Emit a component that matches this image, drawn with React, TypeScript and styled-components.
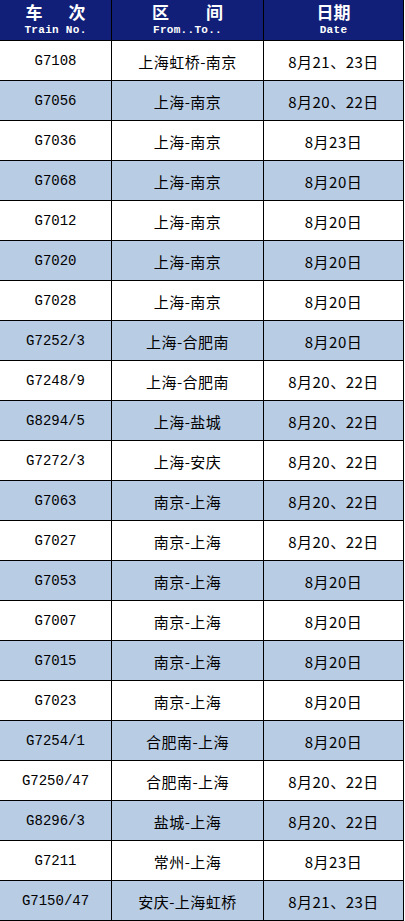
import React from "react";
import styled, { createGlobalStyle } from "styled-components";

const GlobalStyle = createGlobalStyle`
  html, body {
    margin: 0;
    padding: 0;
    background: #ffffff;
  }
  body {
    font-family: "Liberation Mono", "Noto Sans CJK SC", monospace;
  }
`;

interface Train {
  no: string;
  route: string;
  date: string;
}

const trains: Train[] = [
  { no: "G7108", route: "上海虹桥-南京", date: "8月21、23日" },
  { no: "G7056", route: "上海-南京", date: "8月20、22日" },
  { no: "G7036", route: "上海-南京", date: "8月23日" },
  { no: "G7068", route: "上海-南京", date: "8月20日" },
  { no: "G7012", route: "上海-南京", date: "8月20日" },
  { no: "G7020", route: "上海-南京", date: "8月20日" },
  { no: "G7028", route: "上海-南京", date: "8月20日" },
  { no: "G7252/3", route: "上海-合肥南", date: "8月20日" },
  { no: "G7248/9", route: "上海-合肥南", date: "8月20、22日" },
  { no: "G8294/5", route: "上海-盐城", date: "8月20、22日" },
  { no: "G7272/3", route: "上海-安庆", date: "8月20、22日" },
  { no: "G7063", route: "南京-上海", date: "8月20、22日" },
  { no: "G7027", route: "南京-上海", date: "8月20、22日" },
  { no: "G7053", route: "南京-上海", date: "8月20日" },
  { no: "G7007", route: "南京-上海", date: "8月20日" },
  { no: "G7015", route: "南京-上海", date: "8月20日" },
  { no: "G7023", route: "南京-上海", date: "8月20日" },
  { no: "G7254/1", route: "合肥南-上海", date: "8月20日" },
  { no: "G7250/47", route: "合肥南-上海", date: "8月20、22日" },
  { no: "G8296/3", route: "盐城-上海", date: "8月20、22日" },
  { no: "G7211", route: "常州-上海", date: "8月23日" },
  { no: "G7150/47", route: "安庆-上海虹桥", date: "8月21、23日" },
];

const Sheet = styled.div`
  width: 404px;
  display: flex;
  flex-direction: column;
`;

const Row = styled.div<{ $shaded?: boolean; $head?: boolean }>`
  display: grid;
  grid-template-columns: 112px 152px 140px;
  height: ${(p) => (p.$head ? "41px" : "40px")};
  box-sizing: border-box;
  border-bottom: 1px solid #000;
  background: ${(p) => (p.$head ? "#111f78" : p.$shaded ? "#b8cce4" : "#ffffff")};
`;

const Cell = styled.div`
  box-sizing: border-box;
  border-right: 1px solid #000;
  display: flex;
  align-items: center;
  justify-content: center;
  color: #000;
  white-space: nowrap;
  padding-top: 1px;
`;

const HeadCell = styled(Cell)`
  flex-direction: column;
  justify-content: flex-start;
  gap: 5px;
  color: #fff;
  padding-top: 3px;
`;

const HeadTitle = styled.span<{ $spread: number }>`
  font-family: "Noto Sans CJK SC", sans-serif;
  font-weight: 700;
  font-size: 17px;
  line-height: 17px;
  height: 17px;
  letter-spacing: ${(p) => p.$spread}px;
  margin-right: -${(p) => p.$spread}px;
`;

const HeadSub = styled.span`
  font-family: "Liberation Mono", monospace;
  font-weight: 700;
  font-size: 11px;
  line-height: 11px;
  height: 11px;
  letter-spacing: 0.3px;
`;

const TrainNo = styled.span`
  font-family: "Liberation Mono", monospace;
  font-size: 14px;
`;

const CjkText = styled.span`
  font-family: "Noto Sans CJK SC", sans-serif;
  font-size: 15px;
  letter-spacing: 0.5px;
`;

export default function App() {
  return (
    <>
      <GlobalStyle />
      <Sheet>
        <Row $head>
          <HeadCell>
            <HeadTitle $spread={26}>车次</HeadTitle>
            <HeadSub>Train No.</HeadSub>
          </HeadCell>
          <HeadCell>
            <HeadTitle $spread={37}>区间</HeadTitle>
            <HeadSub>From..To..</HeadSub>
          </HeadCell>
          <HeadCell>
            <HeadTitle $spread={0}>日期</HeadTitle>
            <HeadSub>Date</HeadSub>
          </HeadCell>
        </Row>
        {trains.map((t, i) => (
          <Row key={t.no} $shaded={i % 2 === 1}>
            <Cell>
              <TrainNo>{t.no}</TrainNo>
            </Cell>
            <Cell>
              <CjkText>{t.route}</CjkText>
            </Cell>
            <Cell>
              <CjkText>{t.date}</CjkText>
            </Cell>
          </Row>
        ))}
      </Sheet>
    </>
  );
}
